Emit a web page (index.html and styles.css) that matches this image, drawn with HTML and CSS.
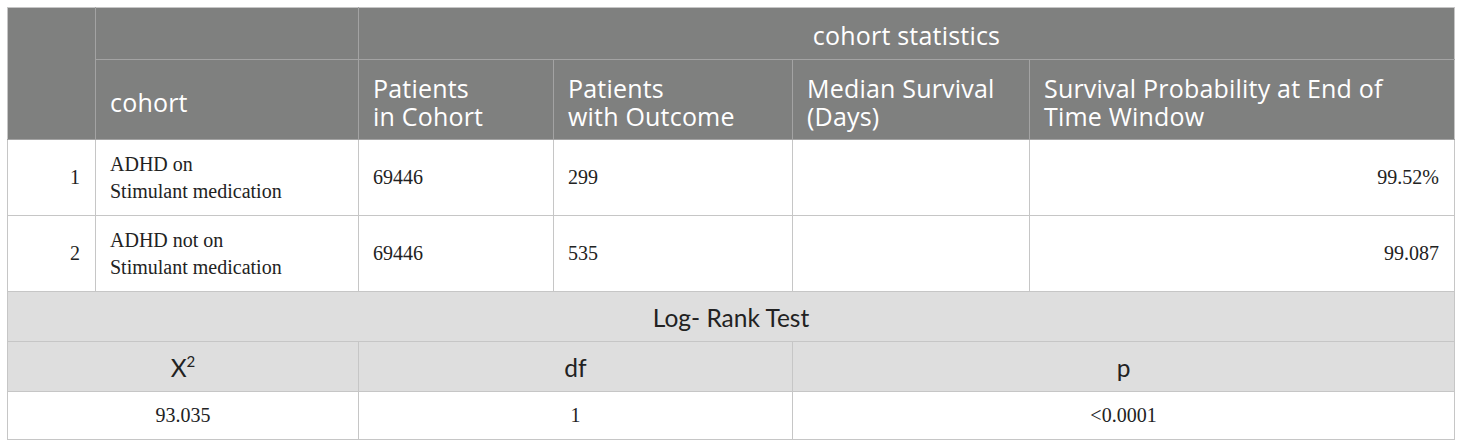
FILE: index.html
```html
<!DOCTYPE html>
<html>
<head>
<meta charset="utf-8">
<link rel="stylesheet" href="styles.css">
</head>
<body>
<table class="stats">
  <colgroup>
    <col class="c1"><col class="c2"><col class="c3"><col class="c4"><col class="c5"><col class="c6">
  </colgroup>
  <thead>
    <tr class="h1">
      <th rowspan="2"></th>
      <th></th>
      <th colspan="4" class="center">cohort statistics</th>
    </tr>
    <tr class="h2">
      <th>cohort</th>
      <th>Patients<br>in Cohort</th>
      <th>Patients<br>with Outcome</th>
      <th>Median Survival<br>(Days)</th>
      <th>Survival Probability at End of<br>Time Window</th>
    </tr>
  </thead>
  <tbody>
    <tr class="row">
      <td class="num">1</td>
      <td>ADHD on<br>Stimulant medication</td>
      <td>69446</td>
      <td>299</td>
      <td></td>
      <td class="num">99.52%</td>
    </tr>
    <tr class="row">
      <td class="num">2</td>
      <td>ADHD not on<br>Stimulant medication</td>
      <td>69446</td>
      <td>535</td>
      <td></td>
      <td class="num">99.087</td>
    </tr>
    <tr class="lr">
      <td colspan="6">Log- Rank Test</td>
    </tr>
    <tr class="lrh">
      <td colspan="2">X<sup>2</sup></td>
      <td colspan="2">df</td>
      <td colspan="2">p</td>
    </tr>
    <tr class="lrv">
      <td colspan="2">93.035</td>
      <td colspan="2">1</td>
      <td colspan="2">&lt;0.0001</td>
    </tr>
  </tbody>
</table>
</body>
</html>
```

FILE: styles.css
```css
html, body {
  margin: 0;
  padding: 0;
  background: #ffffff;
}
body {
  padding: 7px 0 0 7px;
}
.stats {
  border-collapse: collapse;
  table-layout: fixed;
  width: 1447px;
  border: 1px solid #c6c6c6;
}
.c1 { width: 88px; }
.c2 { width: 263px; }
.c3 { width: 195px; }
.c4 { width: 239px; }
.c5 { width: 237px; }
.c6 { width: 425px; }

thead th {
  background: #7f807f;
  color: #ffffff;
  font-family: "Open Sans", "Noto Sans", sans-serif;
  font-weight: 400;
  font-size: 25px;
  line-height: 28px;
  letter-spacing: 0.2px;
  text-align: left;
  padding: 0 14px;
  border: 1px solid #a3a3a3;
  border-top: none;
  vertical-align: middle;
}
thead th:first-child { border-left: none; }
thead tr th:last-child { border-right: none; }
.h1 { height: 52px; }
.h1 th { padding-top: 2px; }
.h1 th.center { text-align: center; }
.h2 { height: 80px; }
.h2 th { padding-top: 4px; }

tbody td {
  font-family: "Liberation Serif", "Times New Roman", serif;
  font-size: 20px;
  line-height: 27px;
  color: #222222;
  padding: 0 14px;
  border: 1px solid #c6c6c6;
  vertical-align: middle;
}
.row { height: 76px; }
.row td.num { text-align: right; padding-right: 15px; }

.lr { height: 50px; }
.lr td {
  background: #dedede;
  text-align: center;
  font-family: "Lato", "Open Sans", sans-serif;
  font-size: 24.5px;
  color: #222222;
  padding-top: 2px;
}
.lrh { height: 50px; }
.lrh td {
  background: #dedede;
  text-align: center;
  font-family: "Lato", "Open Sans", sans-serif;
  font-size: 24.5px;
  color: #222222;
  padding-top: 2px;
}
.lrh sup {
  font-size: 15px;
  line-height: 0;
  vertical-align: 10px;
}
.lrv { height: 48px; }
.lrv td {
  text-align: center;
}
```
